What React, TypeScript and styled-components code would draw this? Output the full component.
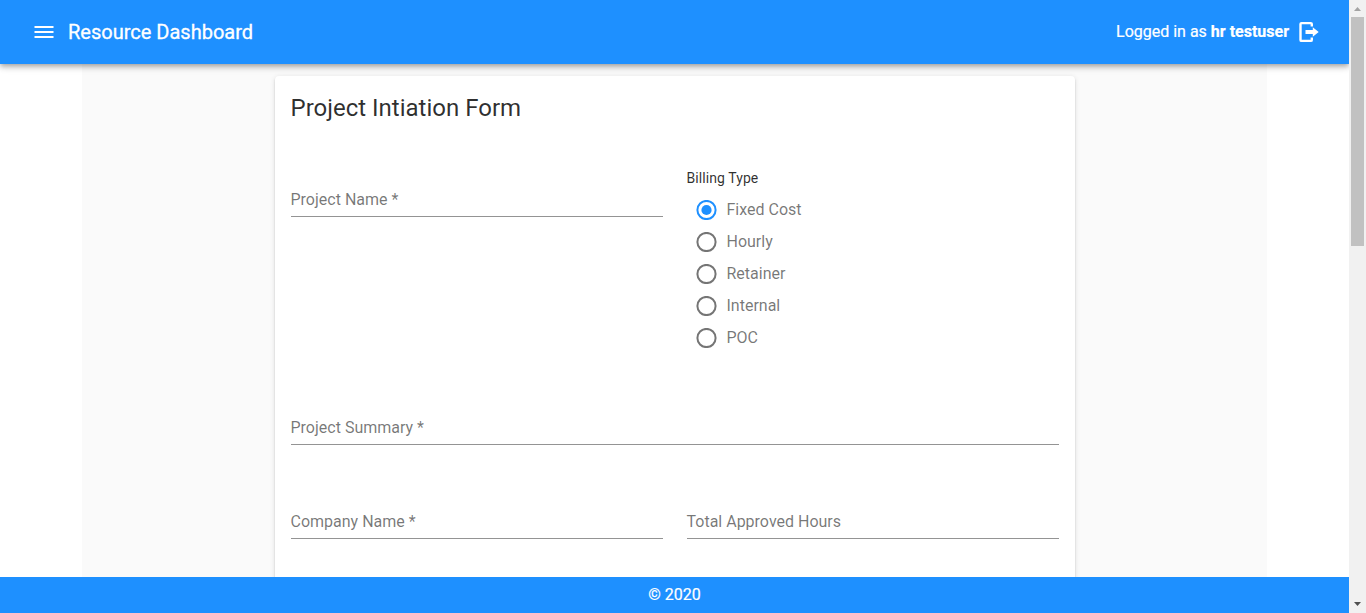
import React, { useState } from "react";
import styled, { createGlobalStyle } from "styled-components";

const GlobalStyle = createGlobalStyle`
  *, *::before, *::after { box-sizing: border-box; }
  html, body { margin: 0; height: 100%; overflow: hidden; }
  body { background: #fff; font-family: Roboto, sans-serif; font-size: 16px; }
`;

const Window = styled.div`
  display: grid;
  grid-template-columns: minmax(0, 1fr) 17px;
  height: 613px;
`;

const Page = styled.div`
  display: flex;
  flex-direction: column;
  height: 613px;
  overflow: hidden;
`;

const AppBar = styled.header`
  position: relative;
  z-index: 1;
  flex: none;
  display: flex;
  align-items: center;
  height: 64px;
  padding: 0 29px 0 34px;
  background: #1e90ff;
  color: #fff;
  box-shadow: 0 2px 4px -1px rgba(0, 0, 0, 0.2), 0 4px 5px rgba(0, 0, 0, 0.14), 0 1px 10px rgba(0, 0, 0, 0.12);
`;

const MenuButton = styled.button`
  display: flex;
  padding: 0;
  border: 0;
  background: none;
  color: inherit;
`;

const AppTitle = styled.h1`
  margin: 0 auto 0 14px;
  font-size: 20px;
  font-weight: 400;
  line-height: 24px;
  -webkit-text-stroke: 0.3px #fff;
`;

const User = styled.div`
  display: flex;
  align-items: center;
  gap: 9px;
  line-height: 24px;
`;

const UserText = styled.span`
  -webkit-text-stroke: 0.2px #fff;

  strong { font-weight: 700; }
`;

const Content = styled.main`
  flex: 1;
  min-height: 0;
  overflow: hidden;
  width: 1185px;
  margin: 0 auto;
  padding-top: 12px;
  background: #fafafa;
`;

const Card = styled.form`
  width: 800px;
  height: 1500px;
  margin: 0 auto;
  padding: 16px;
  border-radius: 4px;
  background: #fff;
  box-shadow: 0 3px 1px -2px rgba(0, 0, 0, 0.2), 0 2px 2px rgba(0, 0, 0, 0.14), 0 1px 5px rgba(0, 0, 0, 0.12);
`;

const CardTitle = styled.h2`
  margin: 0 0 48px;
  font-size: 24px;
  font-weight: 400;
  line-height: 32px;
  color: rgba(0, 0, 0, 0.82);
`;

const FormRow = styled.div<{ $height: number }>`
  display: flex;
  gap: 24px;
  align-items: flex-start;
  height: ${(p) => p.$height}px;
`;

const Field = styled.div`
  flex: 1;
  height: 45px;
  padding-top: 16px;
  border-bottom: 1px solid rgba(0, 0, 0, 0.42);
  line-height: 24px;
  color: rgba(0, 0, 0, 0.54);
`;

const RadioGroup = styled.div`
  flex: 1;
  display: flex;
  flex-direction: column;
`;

const GroupLabel = styled.div`
  height: 22px;
  font-size: 14px;
  line-height: 12px;
  letter-spacing: 0.08px;
  color: rgba(0, 0, 0, 0.82);
`;

const RadioRow = styled.label`
  display: flex;
  align-items: center;
  gap: 10px;
  height: 32px;
  padding-left: 9px;
  color: rgba(0, 0, 0, 0.54);
`;

const RadioIcon = styled.svg<{ $checked: boolean }>`
  display: block;
  width: 21px;
  height: 20px;
  color: ${(p) => (p.$checked ? "#1e90ff" : "#757575")};
`;

const RadioText = styled.span`
  line-height: 20px;
`;

const Footer = styled.footer`
  flex: none;
  height: 36px;
  background: #1e90ff;
  color: #fff;
  line-height: 36px;
  text-align: center;
  -webkit-text-stroke: 0.2px #fff;
`;

const ScrollTrack = styled.div`
  display: flex;
  flex-direction: column;
  justify-content: space-between;
  align-items: center;
  background: #f1f1f1;
`;

const ScrollThumb = styled.div`
  width: 13px;
  height: 229px;
  margin-bottom: auto;
  background: #c1c1c1;
`;

const ScrollArrow = styled.svg`
  display: block;
  flex: none;
  width: 17px;
  height: 17px;
`;

const billingTypes = ["Fixed Cost", "Hourly", "Retainer", "Internal", "POC"];

export default function App() {
  const [billing, setBilling] = useState("Fixed Cost");
  return (
    <Window>
      <GlobalStyle />
      <Page>
        <AppBar>
          <MenuButton aria-label="Menu">
            <svg width="20" height="20" viewBox="0 0 20 20" fill="currentColor">
              <path d="M.5 4h19v2H.5zM.5 9h19v2H.5zM.5 14h19v2H.5z" />
            </svg>
          </MenuButton>
          <AppTitle>Resource Dashboard</AppTitle>
          <User>
            <UserText>
              Logged in as <strong>hr testuser</strong>
            </UserText>
            <svg width="22" height="22" viewBox="0 0 22 22">
              <path
                d="M13.800 5.500V3.100Q13.800 2.100 12.800 2.100H3.500Q2.500 2.100 2.500 3.100V18.900Q2.500 19.900 3.500 19.900H12.800Q13.800 19.900 13.800 18.900V16.500"
                fill="none"
                stroke="#fff"
                strokeWidth="2.400"
              />
              <path d="M7.500 9H14.800V6.300L20.700 11l-5.900 4.700V13H7.500z" fill="#fff" />
            </svg>
          </User>
        </AppBar>
        <Content>
          <Card>
            <CardTitle>Project Intiation Form</CardTitle>
            <FormRow $height={228}>
              <Field>Project Name *</Field>
              <RadioGroup role="radiogroup">
                <GroupLabel>Billing Type</GroupLabel>
                {billingTypes.map((type) => (
                  <RadioRow key={type} onClick={() => setBilling(type)}>
                    <RadioIcon $checked={billing === type} viewBox="0 0 21 20">
                      <circle cx="10.5" cy="10" r="9.1" fill="none" stroke="currentColor" strokeWidth="2" />
                      {billing === type && <circle cx="10.5" cy="10" r="5.1" fill="currentColor" />}
                    </RadioIcon>
                    <RadioText>{type}</RadioText>
                  </RadioRow>
                ))}
              </RadioGroup>
            </FormRow>
            <FormRow $height={94}>
              <Field>Project Summary *</Field>
            </FormRow>
            <FormRow $height={94}>
              <Field>Company Name *</Field>
              <Field>Total Approved Hours</Field>
            </FormRow>
          </Card>
        </Content>
        <Footer>© 2020</Footer>
      </Page>
      <ScrollTrack>
        <ScrollArrow viewBox="0 0 17 17">
          <path d="M5 11h7L8.500 7z" fill="#a3a3a3" />
        </ScrollArrow>
        <ScrollThumb />
        <ScrollArrow viewBox="0 0 17 17">
          <path d="M5 6h7L8.500 10z" fill="#505050" />
        </ScrollArrow>
      </ScrollTrack>
    </Window>
  );
}
